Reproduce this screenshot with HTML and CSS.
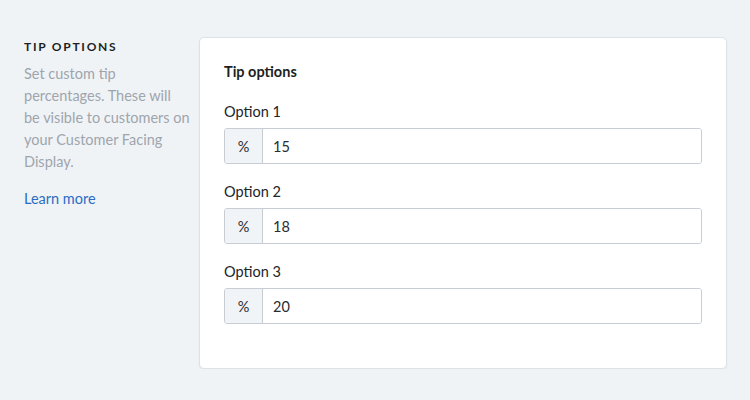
FILE: index.html
```html
<!DOCTYPE html>
<html lang="en">

<head>
    <meta charset="UTF-8" />
    <meta name="viewport" content="width=device-width, initial-scale=1.0" />
    <title>Tip Options</title>
    <link rel="stylesheet" href="styles.css">
</head>

<body>
    <div class="settings">
        <div class="intro">
            <h2>Tip Options</h2>
            <p>Set custom tip percentages. These will be visible to customers on your Customer Facing Display.</p>
            <a href="#" class="learn-more">Learn more</a>
        </div>

        <div class="card">
            <h3>Tip options</h3>

            <div class="field">
                <label for="option1">Option 1</label>
                <div class="input-group">
                    <span class="prefix">%</span>
                    <input type="text" id="option1" value="15" />
                </div>
            </div>

            <div class="field">
                <label for="option2">Option 2</label>
                <div class="input-group">
                    <span class="prefix">%</span>
                    <input type="text" id="option2" value="18" />
                </div>
            </div>

            <div class="field">
                <label for="option3">Option 3</label>
                <div class="input-group">
                    <span class="prefix">%</span>
                    <input type="text" id="option3" value="20" />
                </div>
            </div>
        </div>
    </div>
</body>

</html>
```

FILE: styles.css
```css
* {
    box-sizing: border-box;
    margin: 0;
    padding: 0;
}

body {
    font-family: Lato, 'Open Sans', sans-serif;
    background: #f0f3f6;
    color: #222428;
    padding: 37px 23px 0 24px;
}

.settings {
    display: grid;
    grid-template-columns: 170px 1fr;
    gap: 5px;
}

.intro h2 {
    margin-top: 2px;
    font-size: 12px;
    line-height: 16px;
    font-weight: 700;
    letter-spacing: 1.75px;
    text-transform: uppercase;
    color: #1d1f22;
}

.intro p {
    width: 166px;
    margin-top: 8px;
    font-size: 14.5px;
    line-height: 22px;
    color: #9ea5ad;
}

.learn-more {
    display: inline-block;
    margin-top: 15px;
    font-size: 14.5px;
    line-height: 22px;
    color: #2b6cc4;
    text-decoration: none;
}

/* Card */
.card {
    background: #fff;
    border: 1px solid #dde2e7;
    border-radius: 5px;
    box-shadow: 0 1px 2px rgba(0, 0, 0, 0.06);
    padding: 24px 24px 44px 24px;
}

.card h3 {
    font-size: 14.5px;
    line-height: 20px;
    font-weight: 700;
    color: #1d1f22;
}

.field {
    margin-top: 18px;
}

.field:first-of-type {
    margin-top: 20px;
}

.field label {
    display: block;
    font-size: 14.5px;
    line-height: 20px;
    color: #222428;
    margin-bottom: 6px;
}

.input-group {
    display: flex;
    height: 36px;
    border: 1px solid #c8cdd3;
    border-radius: 3px;
    overflow: hidden;
}

.prefix {
    width: 38px;
    display: flex;
    align-items: center;
    justify-content: center;
    background: #f1f4f7;
    border-right: 1px solid #c8cdd3;
    font-size: 14.5px;
    color: #2a2c30;
}

.input-group input {
    flex: 1;
    border: none;
    outline: none;
    padding: 0 10px;
    font-family: inherit;
    font-size: 14.5px;
    color: #2a2c30;
    background: #fff;
}
```
